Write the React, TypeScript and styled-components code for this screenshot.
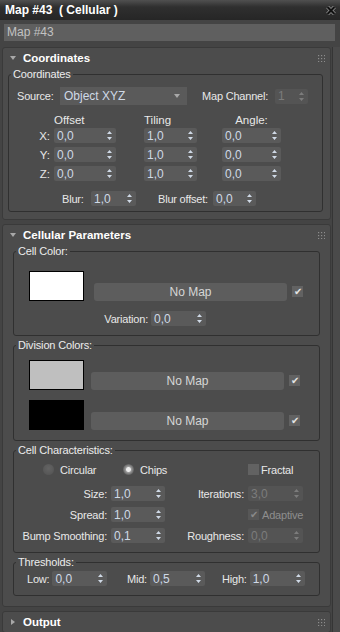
import React from 'react';
import styled, { createGlobalStyle } from 'styled-components';

const GlobalStyle = createGlobalStyle`
  html, body { margin: 0; padding: 0; background: #444444; }
  body {
    font-family: "Liberation Sans", Arial, sans-serif;
    font-size: 11px;
    color: #e6e6e6;
  }
  * { box-sizing: border-box; }
`;

const Window = styled.div`
  width: 340px;
  height: 632px;
  overflow: hidden;
  display: flex;
  flex-direction: column;
  background: #444444;
`;

const TitleBar = styled.div`
  height: 20px;
  flex: none;
  display: flex;
  align-items: center;
  justify-content: space-between;
  padding: 0 4px 0 5px;
  background: linear-gradient(#505050, #2f2f2f 35%, #262626);
  color: #ffffff;
  font-weight: bold;
  font-size: 12px;
  white-space: pre;
`;

const NameField = styled.div`
  flex: none;
  height: 17px;
  margin: 4px 5px 6px 4px;
  padding-left: 3px;
  line-height: 17px;
  background: #5f5f5f;
  color: #c2c2c2;
  font-size: 12px;
`;

const Body = styled.div`
  flex: 1;
  min-height: 0;
  display: flex;
  overflow: hidden;
`;

const Panel = styled.div`
  width: 332px;
  padding-left: 2px;
  display: flex;
  flex-direction: column;
  gap: 4px;
`;

const ScrollStrip = styled.div`
  width: 8px;
  border-left: 1px solid #353535;
  background: #4a4a4a;
`;

const Rollout = styled.section`
  width: 329px;
  flex: none;
  border: 1px solid #3a3a3a;
  border-radius: 3px;
  background: #4c4c4c;
`;

const RolloutHeader = styled.div`
  height: 20px;
  display: flex;
  align-items: center;
  padding: 0 5px 0 7px;
  font-weight: bold;
  font-size: 11.5px;
  color: #ffffff;
`;

const RolloutTitle = styled.span`
  margin-left: 7px;
  flex: 1;
`;

const RolloutBody = styled.div<{ $pad: string }>`
  display: flex;
  flex-direction: column;
  gap: 3px;
  padding: ${p => p.$pad};
`;

const Group = styled.fieldset`
  margin: 0;
  padding: 0;
  min-width: 0;
  border: 1px solid #303030;
  border-radius: 3px;
`;

const Legend = styled.legend`
  margin-left: 2px;
  padding: 0 2px;
  line-height: 13px;
  font-size: 11px;
  letter-spacing: -0.15px;
  color: #ececec;
`;

const GroupBody = styled.div<{ $pad: string; $gap?: number }>`
  display: flex;
  flex-direction: column;
  gap: ${p => p.$gap || 0}px;
  padding: ${p => p.$pad};
`;

const Row = styled.div<{ $mt?: number; $pl?: number; $gap?: number; $align?: string }>`
  display: flex;
  align-items: ${p => p.$align || 'center'};
  margin-top: ${p => p.$mt || 0}px;
  padding-left: ${p => p.$pl || 0}px;
  gap: ${p => p.$gap || 0}px;
`;

const Label = styled.span<{ $w?: number; $right?: boolean; $dim?: boolean; $pr?: number }>`
  flex: none;
  white-space: nowrap;
  font-size: 11px;
  letter-spacing: -0.2px;
  color: ${p => (p.$dim ? '#8e8e8e' : '#e8e8e8')};
  ${p => (p.$w ? `width: ${p.$w}px;` : '')}
  padding-right: ${p => p.$pr || 0}px;
  text-align: ${p => (p.$right ? 'right' : 'left')};
`;

const SpinBox = styled.div<{ $w: number; $disabled?: boolean }>`
  flex: none;
  width: ${p => p.$w}px;
  height: 15px;
  display: flex;
  align-items: center;
  justify-content: space-between;
  padding: 0 4px 0 3px;
  border-radius: 2px;
  background: ${p => (p.$disabled ? '#545454' : '#5a5a5a')};
  color: ${p => (p.$disabled ? '#7c7c7c' : '#cfd9e6')};
  font-size: 12px;
`;

const Dropdown = styled.div`
  flex: none;
  width: 127px;
  height: 18px;
  display: flex;
  align-items: center;
  justify-content: space-between;
  padding: 0 7px 0 4px;
  background: #5a5a5a;
  color: #cfd9e6;
  font-size: 12px;
`;

const XYZGrid = styled.div`
  display: grid;
  grid-template-columns: 45px 90px 78px 59px;
  row-gap: 4px;
  align-items: center;
`;

const AxisLabel = styled.span`
  text-align: right;
  padding-right: 4px;
  font-size: 11.5px;
  color: #e8e8e8;
`;

const ColHead = styled.span<{ $w: number }>`
  width: ${p => p.$w}px;
  text-align: center;
  font-size: 11.5px;
  color: #e8e8e8;
  line-height: 14px;
`;

const Swatch = styled.div<{ $color: string }>`
  flex: none;
  width: 55px;
  height: 30px;
  border: 1px solid #000000;
  background: ${p => p.$color};
`;

const MapButton = styled.div`
  flex: none;
  width: 193px;
  height: 18px;
  display: flex;
  align-items: center;
  justify-content: center;
  border-radius: 3px;
  background: #5d5d5d;
  color: #d6d6d6;
  font-size: 12px;
`;

const CheckBox = styled.div<{ $disabled?: boolean; $slot?: boolean }>`
  flex: none;
  width: 11px;
  height: 11px;
  display: flex;
  align-items: center;
  justify-content: center;
  background: ${p => (p.$disabled ? '#575757' : '#626262')};
  color: ${p => (p.$disabled ? '#8a8a8a' : '#e4e4e4')};
  font-size: 10px;
  line-height: 11px;
  ${p => (p.$slot ? 'margin-bottom: 4px; margin-left: 5px;' : '')}
`;

const ToggleRow = styled.div`
  display: flex;
  align-items: center;
  height: 11px;
  padding-left: 29px;
`;

const Option = styled.div<{ $w?: number; $gap?: number }>`
  flex: none;
  display: flex;
  align-items: center;
  gap: ${p => (p.$gap === undefined ? 6 : p.$gap)}px;
  ${p => (p.$w ? `width: ${p.$w}px;` : '')}
`;

const Radio = styled.div<{ $on?: boolean }>`
  width: 11px;
  height: 11px;
  border-radius: 50%;
  background: ${p =>
    p.$on
      ? 'radial-gradient(circle, #ececec 0 2px, #9a9a9a 3px, #606060 5.5px)'
      : 'radial-gradient(circle at 50% 40%, #646464, #575757 70%, #505050)'};
`;

const ParamGrid = styled.div`
  display: grid;
  grid-template-columns: 93px 54px 75px 55px;
  column-gap: 4px;
  row-gap: 6px;
  align-items: center;
  margin-top: 11px;
`;

const Pair = styled.div<{ $w?: number; $gap?: number; $ml?: number }>`
  flex: none;
  display: flex;
  align-items: center;
  gap: ${p => (p.$gap === undefined ? 3 : p.$gap)}px;
  margin-left: ${p => p.$ml || 0}px;
  ${p => (p.$w ? `width: ${p.$w}px;` : '')}
`;

const ColSlot = styled.div<{ $w: number }>`
  flex: none;
  width: ${p => p.$w}px;
`;

const SpinArrows = () => (
  <svg width="5" height="9" viewBox="0 0 5 9">
    <path d="M2.5 0 L5 3 L0 3 Z M2.5 9 L5 6 L0 6 Z" fill="currentColor" />
  </svg>
);

const Spinner = ({ value, w, disabled }: { value: string; w: number; disabled?: boolean }) => (
  <SpinBox $w={w} $disabled={disabled}>
    <span>{value}</span>
    <SpinArrows />
  </SpinBox>
);

const Grip = () => (
  <svg width="7" height="7" viewBox="0 0 7 7">
    {[0, 3, 6].map(y =>
      [0, 3, 6].map(x => <rect key={`${x}-${y}`} x={x} y={y} width="1.2" height="1.2" fill="#8c8c8c" />)
    )}
  </svg>
);

const Arrow = ({ open }: { open: boolean }) => (
  <svg width="6" height="6" viewBox="0 0 6 6">
    {open ? <path d="M0 1 L6 1 L3 5 Z" fill="#a8a8a8" /> : <path d="M1 0 L5 3 L1 6 Z" fill="#a8a8a8" />}
  </svg>
);

const CloseIcon = () => (
  <svg width="10" height="9" viewBox="0 0 10 9">
    <path d="M1.5 1 L8.5 8 M8.5 1 L1.5 8" stroke="#9a9a9a" strokeWidth="3.6" />
    <path d="M1.5 1 L8.5 8 M8.5 1 L1.5 8" stroke="#111111" strokeWidth="2.2" />
  </svg>
);

const RolloutHead = ({ title, open }: { title: string; open: boolean }) => (
  <RolloutHeader>
    <Arrow open={open} />
    <RolloutTitle>{title}</RolloutTitle>
    <Grip />
  </RolloutHeader>
);

const MapSlot = ({ color, gap }: { color: string; gap: number }) => (
  <Row $pl={15} $align="flex-end">
    <Swatch $color={color} />
    <MapButton style={{ marginLeft: gap }}>No Map</MapButton>
    <CheckBox $slot>✔</CheckBox>
  </Row>
);

const axes = [
  { axis: 'X', offset: '0,0', tiling: '1,0', angle: '0,0' },
  { axis: 'Y', offset: '0,0', tiling: '1,0', angle: '0,0' },
  { axis: 'Z', offset: '0,0', tiling: '1,0', angle: '0,0' },
];

export default function App() {
  return (
    <Window>
      <GlobalStyle />
      <TitleBar>
        <span>Map #43  ( Cellular )</span>
        <CloseIcon />
      </TitleBar>
      <NameField>Map #43</NameField>
      <Body>
        <Panel>
          <Rollout>
            <RolloutHead title="Coordinates" open />
            <RolloutBody $pad="0 7px 7px 5px">
              <Group>
                <Legend>Coordinates</Legend>
                <GroupBody $pad="6px 0 5px 0">
                  <Row $pl={8}>
                    <Label $w={43}>Source:</Label>
                    <Dropdown>
                      <span>Object XYZ</span>
                      <Arrow open />
                    </Dropdown>
                    <Pair $ml={15} $gap={7}>
                      <Label>Map Channel:</Label>
                      <Spinner value="1" w={33} disabled />
                    </Pair>
                  </Row>
                  <Row $mt={8} $pl={45}>
                    <ColSlot $w={90}>
                      <ColHead $w={62}>Offset</ColHead>
                    </ColSlot>
                    <ColSlot $w={78}>
                      <ColHead $w={50}>Tiling</ColHead>
                    </ColSlot>
                    <ColHead $w={59}>Angle:</ColHead>
                  </Row>
                  <XYZGrid style={{ marginTop: 1 }}>
                    {axes.map(a => (
                      <React.Fragment key={a.axis}>
                        <AxisLabel>{a.axis}:</AxisLabel>
                        <Spinner value={a.offset} w={62} />
                        <Spinner value={a.tiling} w={53} />
                        <Spinner value={a.angle} w={59} />
                      </React.Fragment>
                    ))}
                  </XYZGrid>
                  <Row $mt={10} $pl={53}>
                    <Pair $gap={0}>
                      <Label $w={29} $right $pr={9}>Blur:</Label>
                      <Spinner value="1,0" w={45} />
                    </Pair>
                    <Pair $ml={22} $gap={5}>
                      <Label>Blur offset:</Label>
                      <Spinner value="0,0" w={43} />
                    </Pair>
                  </Row>
                </GroupBody>
              </Group>
            </RolloutBody>
          </Rollout>

          <Rollout>
            <RolloutHead title="Cellular Parameters" open />
            <RolloutBody $pad="0 10px 10px 10px">
              <Group>
                <Legend>Cell Color:</Legend>
                <GroupBody $pad="13px 0 9px 0">
                  <MapSlot color="#ffffff" gap={10} />
                  <Row $mt={10} $gap={3}>
                    <Label $w={134} $right>Variation:</Label>
                    <Spinner value="0,0" w={55} />
                  </Row>
                </GroupBody>
              </Group>

              <Group>
                <Legend>Division Colors:</Legend>
                <GroupBody $pad="8px 0 10px 0" $gap={10}>
                  <MapSlot color="#bfbfbf" gap={7} />
                  <MapSlot color="#000000" gap={7} />
                </GroupBody>
              </Group>

              <Group>
                <Legend>Cell Characteristics:</Legend>
                <GroupBody $pad="7px 0 9px 0">
                  <ToggleRow>
                    <Option $w={80}>
                      <Radio />
                      <Label>Circular</Label>
                    </Option>
                    <Option $w={125}>
                      <Radio $on />
                      <Label>Chips</Label>
                    </Option>
                    <Option $gap={2}>
                      <CheckBox />
                      <Label>Fractal</Label>
                    </Option>
                  </ToggleRow>
                  <ParamGrid>
                    <Label $right>Size:</Label>
                    <Spinner value="1,0" w={54} />
                    <Label $right>Iterations:</Label>
                    <Spinner value="3,0" w={55} disabled />

                    <Label $right>Spread:</Label>
                    <Spinner value="1,0" w={54} />
                    <span />
                    <Option $gap={3}>
                      <CheckBox $disabled>✔</CheckBox>
                      <Label $dim>Adaptive</Label>
                    </Option>

                    <Label $right>Bump Smoothing:</Label>
                    <Spinner value="0,1" w={54} />
                    <Label $right>Roughness:</Label>
                    <Spinner value="0,0" w={55} disabled />
                  </ParamGrid>
                </GroupBody>
              </Group>

              <Group>
                <Legend>Thresholds:</Legend>
                <GroupBody $pad="2px 0 9px 0">
                  <Row $pl={13}>
                    <Pair $w={100}>
                      <Label>Low:</Label>
                      <Spinner value="0,0" w={55} />
                    </Pair>
                    <Pair $w={95}>
                      <Label>Mid:</Label>
                      <Spinner value="0,5" w={55} />
                    </Pair>
                    <Pair>
                      <Label>High:</Label>
                      <Spinner value="1,0" w={55} />
                    </Pair>
                  </Row>
                </GroupBody>
              </Group>
            </RolloutBody>
          </Rollout>

          <Rollout>
            <RolloutHead title="Output" open={false} />
          </Rollout>
        </Panel>
        <ScrollStrip />
      </Body>
    </Window>
  );
}
